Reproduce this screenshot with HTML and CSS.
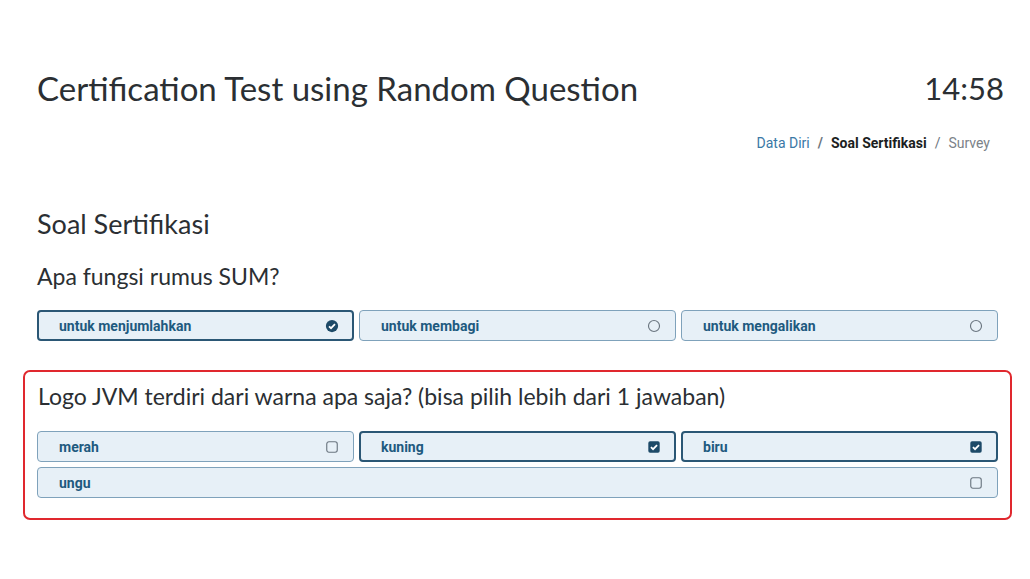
FILE: index.html
```html
<!DOCTYPE html>
<html lang="en">
<head>
    <meta charset="UTF-8">
    <meta name="viewport" content="width=device-width, initial-scale=1.0">
    <title>Certification Test using Random Question</title>
    <link rel="stylesheet" href="styles.css">
</head>
<body>
    <div class="page">
        <div class="header">
            <h1 class="title">Certification Test using Random Question</h1>
            <div class="timer">14:58</div>
        </div>
        <ol class="crumbs">
            <li><a href="#">Data Diri</a></li>
            <li class="active">Soal Sertifikasi</li>
            <li class="muted">Survey</li>
        </ol>

        <h2 class="section">Soal Sertifikasi</h2>

        <div class="question">
            <h3 class="ask">Apa fungsi rumus SUM?</h3>
            <div class="opts">
                <label class="opt on">untuk menjumlahkan
                    <svg class="ico" viewBox="0 0 16 16"><circle cx="8" cy="8" r="7" fill="#1d4a68"/><path d="M4.6 8.3l2.3 2.2 4.5-4.6" fill="none" stroke="#fff" stroke-width="2"/></svg>
                </label>
                <label class="opt">untuk membagi
                    <svg class="ico" viewBox="0 0 16 16"><circle cx="8" cy="8" r="6.3" fill="none" stroke="#6b7680" stroke-width="1.3"/></svg>
                </label>
                <label class="opt">untuk mengalikan
                    <svg class="ico" viewBox="0 0 16 16"><circle cx="8" cy="8" r="6.3" fill="none" stroke="#6b7680" stroke-width="1.3"/></svg>
                </label>
            </div>
        </div>

        <div class="question flagged">
            <h3 class="ask">Logo JVM terdiri dari warna apa saja? (bisa pilih lebih dari 1 jawaban)</h3>
            <div class="opts">
                <label class="opt">merah
                    <svg class="ico" viewBox="0 0 16 16"><rect x="2" y="2" width="12" height="12" rx="2.5" fill="none" stroke="#6b7680" stroke-width="1.3"/></svg>
                </label>
                <label class="opt on">kuning
                    <svg class="ico" viewBox="0 0 16 16"><rect x="1.5" y="1.5" width="13" height="13" rx="2" fill="#1d4a68"/><path d="M4.5 8.2l2.4 2.3 4.6-4.7" fill="none" stroke="#fff" stroke-width="2"/></svg>
                </label>
                <label class="opt on">biru
                    <svg class="ico" viewBox="0 0 16 16"><rect x="1.5" y="1.5" width="13" height="13" rx="2" fill="#1d4a68"/><path d="M4.5 8.2l2.4 2.3 4.6-4.7" fill="none" stroke="#fff" stroke-width="2"/></svg>
                </label>
                <label class="opt wide">ungu
                    <svg class="ico" viewBox="0 0 16 16"><rect x="2" y="2" width="12" height="12" rx="2.5" fill="none" stroke="#6b7680" stroke-width="1.3"/></svg>
                </label>
            </div>
        </div>
    </div>
</body>
</html>
```

FILE: styles.css
```css
* {
    margin: 0;
    padding: 0;
    box-sizing: border-box;
}

body {
    background: #fff;
    color: #212529;
    font-family: Roboto, "Liberation Sans", sans-serif;
}

.page {
    padding: 66px 32px 0 37px;
}

.header {
    display: flex;
    justify-content: space-between;
    align-items: center;
    margin-right: -6px;
}

.title,
.timer,
.section,
.ask {
    font-family: Lato, "Open Sans", sans-serif;
    font-weight: 400;
    color: #2b2f33;
}

.title {
    font-size: 33px;
    line-height: 44px;
}

.timer {
    font-size: 31px;
    line-height: 44px;
}

.crumbs {
    list-style: none;
    display: flex;
    justify-content: flex-end;
    font-size: 14px;
    line-height: 20px;
    margin: 23px 8px 0 0;
}

.crumbs li + li::before {
    content: "/";
    color: #6c757d;
    padding: 0 8px;
}

.crumbs a {
    color: #3a78a6;
    text-decoration: none;
}

.crumbs .active {
    font-weight: 700;
    color: #1b1e21;
}

.crumbs .muted {
    color: #7b8288;
}

.section {
    font-size: 27px;
    line-height: 32px;
    margin-top: 55px;
}

.question {
    margin-top: 22px;
}

.ask {
    font-size: 23px;
    line-height: 28px;
}

.opts {
    display: grid;
    grid-template-columns: repeat(3, 1fr);
    gap: 5px 5px;
    margin-top: 20px;
}

.opt {
    display: flex;
    justify-content: space-between;
    align-items: center;
    height: 31px;
    padding: 0 14px 0 21px;
    background: #e7f0f7;
    border: 1px solid #7fa2bb;
    border-radius: 4px;
    font-size: 14px;
    font-weight: 700;
    color: #1e5a7f;
}

.opt.on {
    border: 2px solid #2b5775;
    padding: 0 13px 0 20px;
}

.opt.wide {
    grid-column: 1 / -1;
}

.ico {
    width: 14px;
    height: 14px;
}

.flagged {
    margin: 29px -14px 0 -14px;
    padding: 10px 12px 20px 12px;
    border: 2px solid #e0282e;
    border-radius: 7px;
}

.flagged .ask {
    padding-left: 1px;
}

.flagged .opts {
    margin-top: 21px;
}
```
